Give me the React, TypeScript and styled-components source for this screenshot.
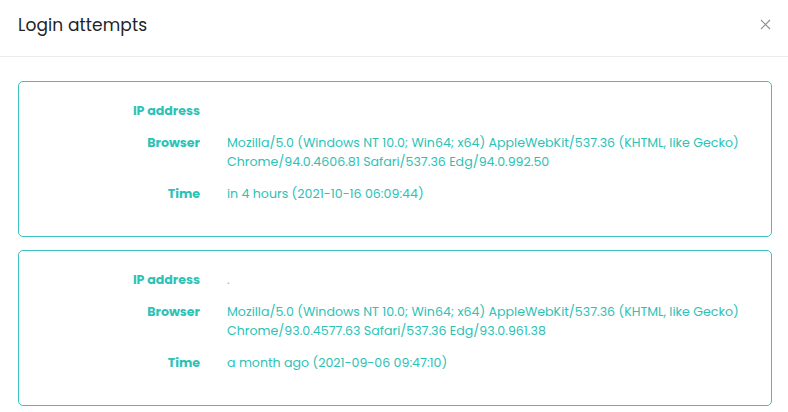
import React from "react";
import styled, { createGlobalStyle } from "styled-components";

const Global = createGlobalStyle`
  html, body { margin: 0; padding: 0; background: #ffffff; }
  body { font-family: "Poppins", "Inter", "Open Sans", sans-serif; }
`;

const Dialog = styled.div`
  width: 788px;
  height: 412px;
  background: #fff;
  overflow: hidden;
  display: flex;
  flex-direction: column;
`;

const Header = styled.header`
  height: 57px;
  box-sizing: border-box;
  border-bottom: 1px solid #e9ecef;
  display: flex;
  align-items: center;
  justify-content: space-between;
  padding: 0 16px 0 18px;
`;

const Title = styled.h5`
  margin: 0;
  font-size: 17px;
  font-weight: 400;
  color: #212529;
  letter-spacing: 0.1px;
  padding-bottom: 6px;
`;

const Close = styled.button`
  border: 0;
  background: transparent;
  padding: 0;
  width: 14px;
  height: 14px;
  display: flex;
  align-items: center;
  justify-content: center;
  cursor: pointer;
  margin-bottom: 7px;
`;

const Body = styled.div`
  padding: 24px 16px 0 18px;
  display: flex;
  flex-direction: column;
  gap: 13px;
`;

const Card = styled.section`
  border: 1px solid #3cc0c0;
  border-radius: 5px;
  padding: 19px 0 33px;
  display: grid;
  grid-template-columns: 181px 1fr;
  column-gap: 27px;
  row-gap: 13px;
  font-size: 12.6px;
  line-height: 19px;
  color: #2cc2b6;
`;

const Label = styled.div`
  text-align: right;
  font-weight: 700;
`;

const Value = styled.div<{ $faint?: boolean }>`
  font-weight: 400;
  min-height: 19px;
  color: ${(p) => (p.$faint ? "#9fb7b5" : "#2cc2b6")};
  padding-right: 20px;
`;

type Attempt = { ip: string; browser: string[]; time: string };

const attempts: Attempt[] = [
  {
    ip: "",
    browser: [
      "Mozilla/5.0 (Windows NT 10.0; Win64; x64) AppleWebKit/537.36 (KHTML, like Gecko)",
      "Chrome/94.0.4606.81 Safari/537.36 Edg/94.0.992.50",
    ],
    time: "in 4 hours (2021-10-16 06:09:44)",
  },
  {
    ip: ".",
    browser: [
      "Mozilla/5.0 (Windows NT 10.0; Win64; x64) AppleWebKit/537.36 (KHTML, like Gecko)",
      "Chrome/93.0.4577.63 Safari/537.36 Edg/93.0.961.38",
    ],
    time: "a month ago (2021-09-06 09:47:10)",
  },
];

export default function App() {
  return (
    <>
      <Global />
      <Dialog>
        <Header>
          <Title>Login attempts</Title>
          <Close aria-label="Close">
            <svg width="11" height="11" viewBox="0 0 11 11">
              <path d="M1 1L10 10M10 1L1 10" stroke="#8a8f96" strokeWidth="1.1" />
            </svg>
          </Close>
        </Header>
        <Body>
          {attempts.map((a, i) => (
            <Card key={i}>
              <Label>IP address</Label>
              <Value $faint={a.ip === "."}>{a.ip}</Value>
              <Label>Browser</Label>
              <Value>
                {a.browser[0]}
                <br />
                {a.browser[1]}
              </Value>
              <Label>Time</Label>
              <Value>{a.time}</Value>
            </Card>
          ))}
        </Body>
      </Dialog>
    </>
  );
}
